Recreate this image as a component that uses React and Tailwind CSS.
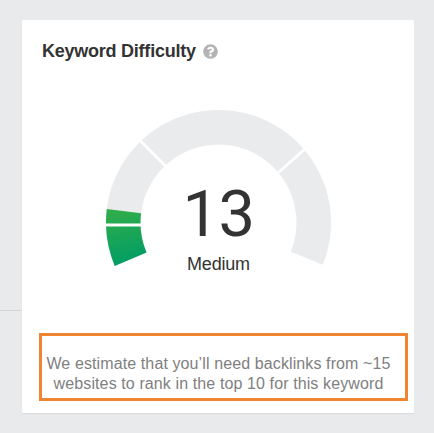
import { FaQuestionCircle } from "react-icons/fa";

const CX = 112.5;
const CY = 112.5;
const OUTER = 112.5;
const INNER = 78;

// angles are in degrees, clockwise from the positive x axis
const point = (r, deg) => {
  const a = (deg * Math.PI) / 180;
  return `${(CX + r * Math.cos(a)).toFixed(2)} ${(CY + r * Math.sin(a)).toFixed(2)}`;
};

const arc = (from, to) => {
  const large = to - from > 180 ? 1 : 0;
  return `M${point(OUTER, from)} A${OUTER} ${OUTER} 0 ${large} 1 ${point(OUTER, to)} L${point(INNER, to)} A${INNER} ${INNER} 0 ${large} 0 ${point(INNER, from)} Z`;
};

const Gauge = () => (
  <svg viewBox="0 0 225 160" className="block w-[225px] h-[160px]">
    <defs>
      <linearGradient id="score" gradientUnits="userSpaceOnUse" x1="0" y1="98" x2="12" y2="156">
        <stop offset="0" stopColor="#34ae48" />
        <stop offset="1" stopColor="#009d66" />
      </linearGradient>
    </defs>
    <path d={arc(157.3, 382)} fill="#e9ebec" />
    <path d={arc(157.3, 186.9)} fill="url(#score)" />
    <g stroke="#fff" strokeWidth="2.8">
      <path d="M-1 115H36" />
      <path d="M33.5 30L61.5 58" />
      <path d="M199.5 38.5L172.5 62.5" />
    </g>
  </svg>
);

const App = () => {
  return (
    <div className="flex w-[434px] h-[433px] pt-5 bg-[#e9eaec] font-['Liberation_Sans',Arial,sans-serif]">
      <div className="w-[22px] h-[291px] border-b border-[#d3d5d7]" />
      <div className="flex flex-col w-[392px] h-[393px] bg-white shadow-[0_1px_1px_rgba(0,0,0,0.06)]">
        <div className="flex items-center gap-[7px] pl-5 pt-[19px]">
          <h2 className="text-[18px] leading-6 font-bold tracking-[-0.24px] text-[#333]">Keyword Difficulty</h2>
          <FaQuestionCircle className="w-[15px] h-[15px] text-[#b3b3b3]" />
        </div>

        <div className="grid w-[225px] ml-[84px] mt-[47px]">
          <div className="col-start-1 row-start-1">
            <Gauge />
          </div>
          <div className="col-start-1 row-start-1 flex flex-col items-center pt-[69px] text-[#333]">
            <div className="font-[Roboto,sans-serif] text-[65px] leading-[70px] tracking-[-0.5px]">13</div>
            <div className="mt-[2px] text-[18px] leading-[26px] tracking-[-0.2px]">Medium</div>
          </div>
        </div>

        <div className="w-[369px] h-[68px] ml-[17px] mt-[56px] pt-[18px] pr-[10px] border-3 border-[#ef8432] text-center text-[16px] leading-5 tracking-[0.11px] text-[#808080]">
          <p className="whitespace-nowrap">We estimate that you’ll need backlinks from ~15</p>
          <p className="whitespace-nowrap">websites to rank in the top 10 for this keyword</p>
        </div>
      </div>
    </div>
  );
};

export default App;
